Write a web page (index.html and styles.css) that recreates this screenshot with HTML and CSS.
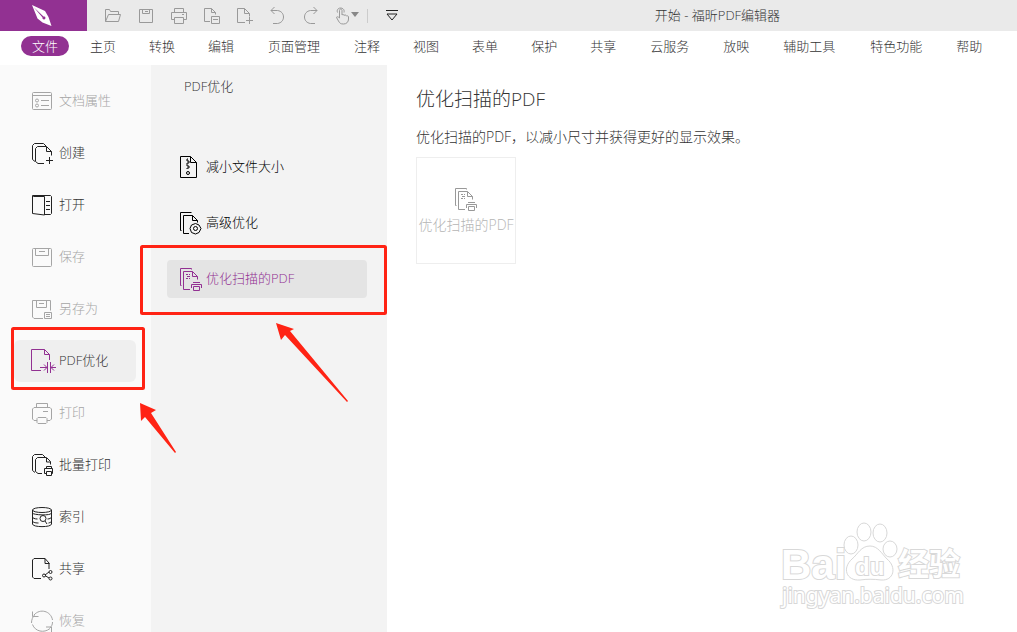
FILE: index.html
```html
<!DOCTYPE html>
<html lang="zh-CN">
<head>
  <meta charset="UTF-8">
  <title>开始 - 福昕PDF编辑器</title>
  <link rel="stylesheet" href="styles.css">
</head>
<body>
  <!-- Icon shared by the panel and the card -->
  <svg class="sprite" aria-hidden="true">
    <symbol id="scan" viewBox="0 0 24 24">
      <path d="M2.500 18.500h-1v-17h11v1M11 22.500H4.500V4.500h9l5 5v3M13.500 4.500v5h5M7 7.500h2m1 0h1M8 9.500h3M7 11.500h2m1 0h1M14 15.500h7M12.500 21v-3.500h10V21M14.500 19.500h6v4h-6z"/>
    </symbol>
  </svg>

  <div class="app">
    <header class="titlebar">
      <div class="logo">
        <svg width="24" height="24" viewBox="0 0 24 24"><path fill="#fff" d="M0 1l13 6 3.500 6 3 9-9-3.500-5-4zM1.800 3.200L10.500 13.500a1.500 1.500 0 1 0 1-1z"/></svg>
      </div>
      <div class="tools">
        <button class="tool" aria-label="打开"><svg viewBox="0 0 18 18"><path d="M1.500 14.500v-12h4l1 2h8v3M1.500 14.500l3-7h12l-2 7z"/></svg></button>
        <button class="tool" aria-label="保存"><svg viewBox="0 0 18 18"><path d="M2.500 2.500h13v13h-13zM5.500 2.500v4h7v-4M8 4.500h3"/></svg></button>
        <button class="tool" aria-label="打印"><svg viewBox="0 0 18 18"><path d="M4.500 5.500v-4h9v4M4.500 12.500h-3v-7h15v7h-3M4.500 10.500h9v6h-9zM12 7.500h2"/></svg></button>
        <button class="tool" aria-label="转换"><svg viewBox="0 0 18 18"><path d="M7 14.500H1.500v-13h7l4 4v2M8.500 1.500v4h4M8.500 9.500h8v7h-8zM10 12.500h5"/></svg></button>
        <button class="tool" aria-label="新建"><svg viewBox="0 0 18 18"><path d="M9 15.500H1.500v-14h7l5 5v3M8.500 1.500v5h5M13.500 10v7M10 13.500h7"/></svg></button>
        <button class="tool" aria-label="撤销"><svg viewBox="0 0 18 18"><path d="M5.500 0L2 3.500 5.500 7M2 3.500h6.500c8 1 8 12 0 13H4"/></svg></button>
        <button class="tool" aria-label="重做"><svg viewBox="0 0 18 18"><path d="M11.500 0L15 3.500 11.500 7M15 3.500H8.500c-8 1-8 12 0 13H13"/></svg></button>
        <button class="tool hand" aria-label="手型工具"><svg viewBox="0 0 24 18"><path d="M4.500 11V3.500c0-2 2.500-2 2.500 0V8c1-1 2-.5 2 .5 1-1 2-.5 2.500.5 1-.5 2 0 2 1v2c0 3-2 5-5 5-3 0-4-1-5-3l-2-3.500c0-1 1.500-1 3 .5M2.500 5.500c-2-6 8-6 6.500 0"/><path class="solid" d="M16 5h8l-4 5z"/></svg></button>
        <span class="divider"></span>
        <button class="tool more" aria-label="自定义"><svg viewBox="0 0 18 18"><path d="M3 3.500h12M4 7h10L9 13z"/></svg></button>
      </div>
      <div class="title">开始 - 福昕PDF编辑器</div>
    </header>

    <nav class="menubar">
      <a href="#" class="file">文件</a>
      <a href="#">主页</a>
      <a href="#">转换</a>
      <a href="#">编辑</a>
      <a href="#" class="wide">页面管理</a>
      <a href="#">注释</a>
      <a href="#">视图</a>
      <a href="#">表单</a>
      <a href="#">保护</a>
      <a href="#">共享</a>
      <a href="#" class="wide">云服务</a>
      <a href="#">放映</a>
      <a href="#" class="wide">辅助工具</a>
      <a href="#" class="wide">特色功能</a>
      <a href="#">帮助</a>
    </nav>

    <div class="content">
      <nav class="sidebar">
        <button disabled><svg viewBox="0 0 24 24"><rect x="1.500" y="3.500" width="19" height="17" rx="1"/><path d="M2 6.500h18M10 11.500h8M10 16.500h8"/><circle cx="6" cy="11.500" r="1.500"/><circle cx="6" cy="16.500" r="1.500"/></svg>文档属性</button>
        <button><svg viewBox="0 0 24 24"><path d="M4 20.500l-2.500-2v-14l2-2h9l3 3M13 22.500H7l-2.500-2v-13l2-2h9l5 5v4M15.500 6v4.500h5M18.500 16v7M15 19.500h7"/></svg>创建</button>
        <button><svg viewBox="0 0 24 24"><path d="M13.500 3.500h-11l-1-1v18l12 1.500zM2 2.500h17.500l1 1v17l-1 1h-6M15 8.500h4M15 12.500h4M15 16.500h4"/></svg>打开</button>
        <button disabled><svg viewBox="0 0 24 24"><rect x="1.500" y="3.500" width="19" height="18" rx="1"/><path d="M4.500 3.500v7h13v-7M8 6.500h6"/></svg>保存</button>
        <button disabled><svg viewBox="0 0 24 24"><path d="M12 21.500H3l-1.500-1.500V3.500h18v10M5.500 3.500v7h10v-7M8 6.500h5M13.500 15.500h7v6h-7zM15 17.500h4M15 19.500h4"/></svg>另存为</button>
        <button class="active"><svg viewBox="0 0 24 24"><path d="M10 21.500H.5V.5h13l5 5V11M13.500.5v5h5M16.500 13v11M19.500 13v11M9 18.500h7M13 15.500l3 3-3 3M25 18.500h-5M23 15.500l-3 3 3 3"/></svg>PDF优化</button>
        <button disabled><svg viewBox="0 0 24 24"><path d="M5.500 6.500v-4h11v4M6 19.500H3L1.500 18V8L3 6.500h16L20.500 8v10L19 19.500h-3M7 16.500h8l1 1v4l-1 1H7l-1-1v-4zM12 10.500h5"/></svg>打印</button>
        <button><svg viewBox="0 0 24 24"><path d="M4 19.500l-2.500-2V3.500l2-2h8l3 3M11 20.500H7l-2.500-2V6.500l2-2h9l4 4v3M15.500 5v4h4M15.500 15.500v-2h5v2M15 20.500h-1.500v-5h8v5H20M15.500 18.500h5v4h-5z"/></svg>批量打印</button>
        <button><svg viewBox="0 0 24 24"><ellipse cx="11" cy="5" rx="9.500" ry="2.500"/><path d="M1.500 5v3c0 2 19 3 19 0V5M1.500 8v4c0 1 2 2 5 2M1.500 12v4c0 1 2 2 6 2M1.500 16v3c0 3.500 19 3.500 19 0v-3M20.500 8v4c0 1-2 2-4 2M20.500 12v4c0 1-1 1.500-3 2"/><circle cx="12" cy="13.500" r="3"/><path d="M14 16l2 3"/></svg>索引</button>
        <button><svg viewBox="0 0 24 24"><path d="M10 21.500H3L1.500 20V3L3 1.500h11l4 4.500v6M14 1.500v5h4.500M14 18l4-3M14 18.500l4 2.500"/><circle cx="13" cy="18.500" r="1.500"/><circle cx="19.500" cy="15" r="1.500"/><circle cx="19.500" cy="21.500" r="1.500"/></svg>共享</button>
        <button disabled><svg viewBox="0 0 24 24"><path d="M.5 14c0-3 1-6 3-8M3 6c6-7 17-4 18.500 5M21.500 13c0 3-1 4-2.500 6M19 19.500c-6 5-15 3-17.500-4M1.500 2.500v5h6M20.500 23v-5H15"/></svg>恢复</button>
      </nav>

      <section class="panel">
        <h2>PDF优化</h2>
        <button><svg viewBox="0 0 24 24"><path d="M1.500 1.500h10l6 6v15h-16zM11.500 1.500v6h6M9 4H8v2h2v2H8v3h2v2H8v1"/><circle cx="9" cy="18" r="1.500"/></svg>减小文件大小</button>
        <button><svg viewBox="0 0 24 24"><path d="M2.500 19.500h-1v-18h11M10 22.500H4.500v-18h9l5 5v2M13.500 4.500v5h5"/><path d="M16.500 12.500l3.500 1.500 2 3.500-2 4-3.500 1.500-4-1.500-1.500-4 1.500-3.500z"/><circle cx="16.500" cy="17.500" r="2"/></svg>高级优化</button>
        <button class="active"><svg><use href="#scan"/></svg>优化扫描的PDF</button>
      </section>

      <main class="detail">
        <h1>优化扫描的PDF</h1>
        <p>优化扫描的PDF，以减小尺寸并获得更好的显示效果。</p>
        <button class="card" disabled><svg><use href="#scan"/></svg>优化扫描的PDF</button>
      </main>
    </div>

    <!-- Red marks over the steps to follow -->
    <svg class="marks" width="400" height="470" viewBox="0 0 400 470" aria-hidden="true">
      <rect x="141.500" y="246.500" width="244" height="67" rx="1"/>
      <rect x="12.500" y="328.500" width="131" height="60" rx="1"/>
      <path d="M276 323l18 6-4 2 58 70-1 1-62-67-4 5z"/>
      <path d="M140 403l16 7-5 3 25 39-1 1-30-36-4 4z"/>
    </svg>

    <svg class="watermark" width="190" height="100" viewBox="0 0 190 100" aria-label="Baidu 经验">
      <ellipse cx="74" cy="32" rx="7" ry="9"/>
      <ellipse cx="87" cy="19" rx="7" ry="9"/>
      <ellipse cx="103" cy="20" rx="7" ry="9"/>
      <ellipse cx="113" cy="36" rx="7" ry="8"/>
      <path d="M93 33c8 0 12 8 17 13 10 8 7 22-6 21-8-1-14-1-21 0-14 1-18-12-8-21 6-5 9-13 18-13z"/>
      <text class="bai" x="4" y="66">Bai</text>
      <text class="du" x="78" y="62">du</text>
      <text class="exp" x="121" y="62">经验</text>
      <text class="url" x="5" y="90">jingyan.baidu.com</text>
    </svg>
  </div>
</body>
</html>
```
FILE: styles.css
```css
body {
  margin: 0;
  font-family: "Open Sans", "Noto Sans CJK SC", sans-serif;
  font-size: 13px;
  font-weight: 300;
  line-height: 20px;
  color: #333;
  background-color: #fff;
}

button {
  margin: 0;
  padding: 0;
  border: none;
  background: none;
  font: inherit;
  color: inherit;
  white-space: nowrap;
}

svg {
  display: block;
  flex: none;
  overflow: visible;
  fill: none;
  stroke: currentColor;
}

.sprite {
  position: absolute;
  width: 0;
  height: 0;
}

.app {
  position: relative;
  display: flex;
  flex-direction: column;
  height: 100vh;
  overflow: hidden;
}

/* Title bar */
.titlebar {
  display: flex;
  flex: none;
  height: 31px;
  background-color: #eaeaea;
}

.logo {
  display: flex;
  align-items: center;
  justify-content: center;
  width: 87px;
  background-color: #923192;
}

.logo svg {
  stroke: none;
}

.tools {
  display: flex;
  align-items: center;
  gap: 15px;
  padding: 0 17px;
  color: #999;
}

.tool svg {
  width: 18px;
  height: 18px;
}

.hand,
.hand svg {
  width: 24px;
}

.hand {
  margin-right: -7px;
}

.solid {
  fill: #888;
  stroke: none;
}

.divider {
  width: 1px;
  height: 14px;
  background-color: #ccc;
}

.more {
  color: #222;
}

.title {
  flex: 1;
  padding-bottom: 2px;
  align-self: center;
  text-align: center;
  white-space: nowrap;
}

/* Menu bar */
.menubar {
  display: flex;
  flex: none;
  align-items: center;
  gap: 1px;
  box-sizing: border-box;
  height: 34px;
  padding: 0 0 4px 21px;
}

.menubar a {
  padding: 0 16px;
  color: #333;
  text-decoration: none;
  white-space: nowrap;
}

.menubar .wide {
  padding: 0 17px;
}

.menubar .file {
  margin-right: 4px;
  padding: 0 11px;
  border-radius: 10px;
  background-color: #923192;
  color: #fff;
}

.content {
  display: flex;
  flex: 1;
  min-height: 0;
}

/* Left column */
.sidebar {
  display: flex;
  flex: none;
  flex-direction: column;
  gap: 10px;
  box-sizing: border-box;
  width: 151px;
  padding: 15px 15px 0 14px;
  background-color: #fafafa;
}

.sidebar button {
  display: flex;
  flex: none;
  align-items: center;
  gap: 4px;
  box-sizing: border-box;
  height: 42px;
  padding: 0 0 2px 17px;
  border-radius: 6px;
}

.sidebar svg,
.panel svg,
.card svg {
  width: 24px;
  height: 24px;
}

.sidebar svg,
.panel svg {
  margin-top: 2px;
}

.sidebar svg {
  color: #222;
}

.sidebar button:disabled,
.sidebar button:disabled svg {
  color: #a5a5a5;
}

.sidebar .active {
  background-color: #efefef;
}

.sidebar .active svg {
  color: #923192;
}

/* Second column */
.panel {
  display: flex;
  flex: none;
  flex-direction: column;
  gap: 18px;
  box-sizing: border-box;
  width: 236px;
  padding: 11px 20px 0 16px;
  background-color: #f3f3f3;
}

.panel h2 {
  margin: 0 0 34px 17px;
  font-size: 13px;
  font-weight: 300;
}

.panel button {
  display: flex;
  align-items: center;
  gap: 3px;
  box-sizing: border-box;
  height: 38px;
  padding: 0 0 2px 12px;
  border-radius: 4px;
  color: #000;
}

.panel .active {
  background-color: #e4e4e4;
  color: #923192;
}

/* Main area */
.detail {
  flex: 1;
  padding: 20px 29px;
}

.detail h1 {
  margin: 0;
  font-size: 19px;
  font-weight: 300;
  line-height: 28px;
}

.detail p {
  margin: 14px 0 10px;
  font-size: 14px;
}

.card {
  display: flex;
  flex-direction: column;
  align-items: center;
  justify-content: center;
  gap: 4px;
  width: 100px;
  height: 107px;
  border: 1px solid #eee;
  font-size: 14px;
  color: #b5b5b5;
}

.card svg {
  color: #999;
}

/* Overlays */
.marks {
  position: absolute;
  top: 0;
  left: 0;
  pointer-events: none;
}

.marks rect {
  stroke: #ff2314;
  stroke-width: 3;
}

.marks path {
  fill: #ff2314;
  stroke: none;
}

.watermark {
  position: absolute;
  right: 50px;
  bottom: 19px;
  fill: #fff;
  stroke: #d8d8d8;
  pointer-events: none;
}

.watermark text {
  font-family: "Liberation Sans", sans-serif;
  font-weight: 700;
  paint-order: stroke;
  stroke-width: 2;
}

.watermark .bai {
  font-size: 42px;
}

.watermark .du {
  font-size: 24px;
}

.watermark .exp {
  font-family: "Noto Sans CJK SC", sans-serif;
  font-size: 31px;
}

.watermark .url {
  font-family: "Noto Sans", sans-serif;
  font-size: 21px;
  font-weight: 400;
}
```
